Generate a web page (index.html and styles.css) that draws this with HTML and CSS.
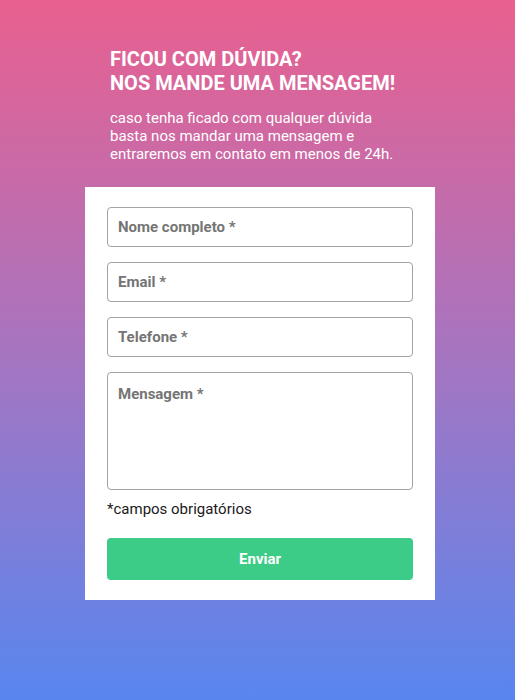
FILE: index.html
```html
<!DOCTYPE html>
<html lang="pt">
<head>
<meta charset="utf-8">
<link rel="stylesheet" href="styles.css">
</head>
<body>
<main class="page">
  <header class="intro">
    <h1 class="title">FICOU COM DÚVIDA?<br>NOS MANDE UMA MENSAGEM!</h1>
    <p class="lead">caso tenha ficado com qualquer dúvida basta nos mandar uma mensagem e entraremos em contato em menos de 24h.</p>
  </header>
  <form class="card">
    <input class="field" type="text" placeholder="Nome completo *">
    <input class="field" type="email" placeholder="Email *">
    <input class="field" type="tel" placeholder="Telefone *">
    <textarea class="field area" placeholder="Mensagem *"></textarea>
    <p class="note">*campos obrigatórios</p>
    <button class="send" type="button">Enviar</button>
  </form>
</main>
</body>
</html>
```
FILE: styles.css
```css
html, body {
  margin: 0;
  height: 100%;
}
body {
  background: linear-gradient(180deg, #e9608f 0%, #a775c0 50%, #5886ef 100%);
  font-family: Roboto, "Liberation Sans", sans-serif;
  min-height: 700px;
}
.page {
  padding: 47px 0 0 85px;
}
.intro {
  width: 300px;
  padding-left: 25px;
  color: #fff;
}
.title {
  margin: 0;
  font-size: 20px;
  line-height: 24px;
  font-weight: 700;
}
.lead {
  margin: 14px 0 0;
  font-size: 15px;
  line-height: 18px;
}
.card {
  margin-top: 24px;
  width: 350px;
  box-sizing: border-box;
  background: #fff;
  padding: 20px 22px;
  display: flex;
  flex-direction: column;
}
.field {
  box-sizing: border-box;
  width: 306px;
  height: 40px;
  border: 1px solid #a3a3a3;
  border-radius: 4px;
  padding: 0 10px;
  margin: 0 0 15px;
  font-family: Roboto, "Liberation Sans", sans-serif;
  font-size: 15px;
  font-weight: 700;
  color: #333;
  background: #fff;
}
.field::placeholder {
  color: #757575;
  opacity: 1;
}
.area {
  height: 118px;
  padding: 12px 10px;
  resize: none;
  margin-bottom: 0;
}
.note {
  margin: 9px 0 0;
  font-size: 15px;
  line-height: 20px;
  color: #1a1a1a;
}
.send {
  margin-top: 19px;
  height: 42px;
  border: 0;
  border-radius: 4px;
  background: #3ccc87;
  color: #fff;
  font-family: Roboto, "Liberation Sans", sans-serif;
  font-size: 15px;
  font-weight: 700;
}
```
